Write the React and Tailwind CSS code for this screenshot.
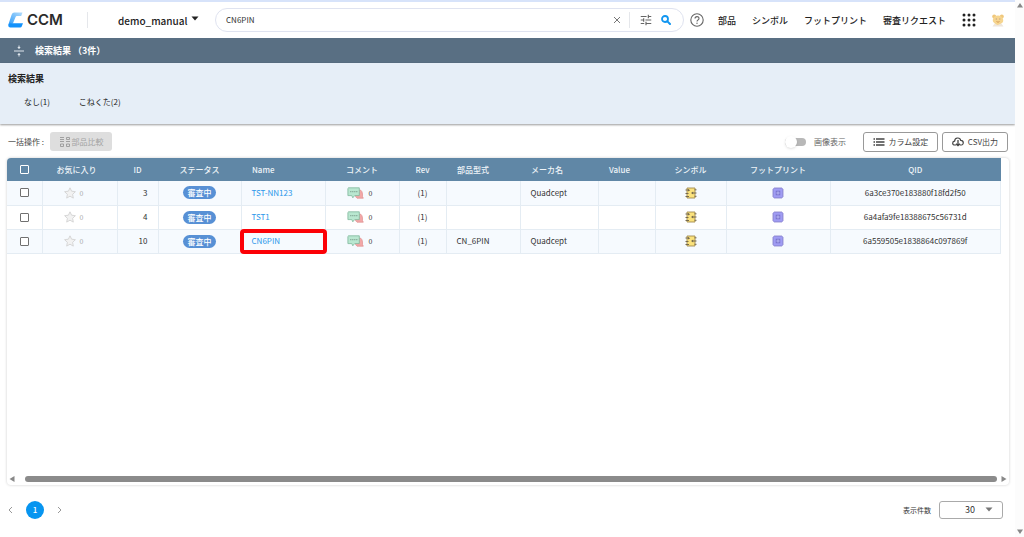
import React from 'react';

const rows = [
  { id: 3, name: 'TST-NN123', model: '', maker: 'Quadcept', qid: '6a3ce370e183880f18fd2f50' },
  { id: 4, name: 'TST1', model: '', maker: '', qid: '6a4afa9fe18388675c56731d' },
  { id: 10, name: 'CN6PIN', model: 'CN_6PIN', maker: 'Quadcept', qid: '6a559505e1838864c097869f', marked: true },
];

const navItems = ['部品', 'シンボル', 'フットプリント', '審査リクエスト'];

const Logo = () => (
  <a href="#" className="flex items-center gap-[3px] w-20 shrink-0 border-r border-gray-200 h-4 text-[#2b2b2b]">
    <svg width="16" height="16" viewBox="0 0 16 16">
      <defs>
        <linearGradient id="logoTop" x1="0" y1="1" x2="1" y2="0">
          <stop offset="0" stopColor="#2f9dfb" />
          <stop offset="1" stopColor="#b5dcfa" />
        </linearGradient>
      </defs>
      <path d="M6.2 0.5H14.5L13.2 4H8.8Q8 4 7.6 4.9L4.9 11.6 0.4 12.4 3.6 2.8Q4.4 0.6 6.2 0.5z" fill="url(#logoTop)" />
      <path d="M0.3 12.6Q1 11.3 3 11.3H15L13.7 14.6Q13.3 15.6 12.2 15.6H2.4Q0 15.4 0.3 12.6z" fill="#1492fb" />
    </svg>
    <span className="font-[Inter,sans-serif] text-[15px] font-semibold">CCM</span>
  </a>
);

const Caret = ({ className }) => (
  <svg className={className} width="8" height="5" viewBox="0 0 8 5">
    <path d="M0.5 0.5h7L4 4.5z" fill="currentColor" />
  </svg>
);

const TuneIcon = () => (
  <svg width="14" height="14" viewBox="0 0 24 24" fill="#666">
    <path d="M3 17v2h6v-2H3zM3 5v2h10V5H3zm10 16v-2h8v-2h-8v-2h-2v6h2zM7 9v2H3v2h4v2h2V9H7zm14 4v-2H11v2h10zm-6-4h2V7h4V5h-4V3h-2v6z" />
  </svg>
);

const SearchIcon = () => (
  <svg width="10" height="10" viewBox="0 0 10 10" fill="none" stroke="#1296f0">
    <circle cx="4" cy="4" r="3" strokeWidth="1.8" />
    <path d="M6.4 6.4L9 9" strokeWidth="2" strokeLinecap="round" />
  </svg>
);

const HelpIcon = () => (
  <svg width="14" height="14" viewBox="0 0 14 14" fill="none" stroke="#666">
    <circle cx="7" cy="7" r="6.2" strokeWidth="1.1" />
    <path d="M5 5.6C5 3 9 3 9 5.4 9 6.8 7 6.9 7 8.6" strokeWidth="1.1" />
    <circle cx="7" cy="10.3" r="0.7" fill="#666" stroke="none" />
  </svg>
);

const AppsIcon = () => (
  <svg width="14" height="14" viewBox="0 0 14 14" fill="#222">
    {[2, 7, 12].map((y) => [2, 7, 12].map((x) => <circle key={`${x}-${y}`} cx={x} cy={y} r="1.5" />))}
  </svg>
);

const Avatar = () => (
  <svg width="12" height="13" viewBox="0 0 12 13">
    <path d="M0.5 12.5L3 9h6l2.5 3.5z" fill="#eee6dc" />
    <circle cx="2.2" cy="2.4" r="2" fill="#efc77c" />
    <circle cx="9.8" cy="2.4" r="2" fill="#efc77c" />
    <path d="M1 5Q2 1.5 6 1.5T11 5 9 9.5 6 11 3 9.5 1 5z" fill="#f6d58f" />
    <path d="M3.8 5h1M7.3 5h1" stroke="#a88" strokeWidth="0.9" />
    <path d="M4.5 7.5Q6 9 7.5 7.5" stroke="#d59a55" fill="none" />
  </svg>
);

const CollapseIcon = () => (
  <svg width="12" height="12" viewBox="0 0 12 12" fill="none" stroke="#dfe6ec">
    <path d="M1 6h10M6 0.5v3M6 11.5v-3" />
    <path d="M4.3 2L6 4l1.7-2zM4.3 10L6 8l1.7 2z" fill="#dfe6ec" stroke="none" />
  </svg>
);

const CompareIcon = () => (
  <svg width="12" height="12" viewBox="0 0 12 12" fill="none" stroke="#999">
    <path d="M1 1.5h4M1 3.5h4M1 5.5h4M1.5 8v2.5h3V8zM7.5 1.5v2h3v-2zM7 5.5h4M7.5 8v2.5h3V8z" strokeWidth="0.9" />
  </svg>
);

const ListIcon = () => (
  <svg width="12" height="10" viewBox="0 0 12 10" stroke="#444" strokeWidth="1.3">
    <path d="M0.5 2h1.5M3 2h8.5M0.5 5h1.5M3 5h8.5M0.5 8h1.5M3 8h8.5" />
  </svg>
);

const CloudIcon = () => (
  <svg width="12" height="10" viewBox="0 0 12 10" fill="none" stroke="#444">
    <path d="M4.3 8H2.8C0 8 0 4.4 2.6 4.2 2.8 0.2 8 0 8.7 3.3 12 3.2 12 8 9.3 8H7.8" strokeWidth="1.2" />
    <path d="M6 3v5.5M4 6.7l2 2 2-2" strokeWidth="1.3" />
  </svg>
);

const StarIcon = () => (
  <svg width="12" height="12" viewBox="0 0 12 12">
    <path d="M6 0.8l1.6 3.4 3.8 0.5-2.8 2.6 0.7 3.8L6 9.2l-3.3 1.9 0.7-3.8L0.6 4.7l3.8-0.5z" fill="#f2f2f2" stroke="#d2d2d2" strokeWidth="0.9" />
  </svg>
);

const CommentIcon = () => (
  <svg width="17" height="12" viewBox="0 0 17 12">
    <path d="M10 3h3.5Q15.5 4.5 15.5 7v2.5l0.8 1.7H10l-1.5-1.7z" fill="#f3a7a7" stroke="#e09090" strokeWidth="0.7" />
    <path d="M1.5 0.8h10.8v7.8H7.6L5.8 10.8 4.8 8.6H0.9V1.4z" fill="#b9e7d0" stroke="#7fb79c" strokeWidth="0.8" />
    <path d="M3 4.6h7.5" stroke="#8db3a1" strokeWidth="1.4" strokeDasharray="1.5 0.5" />
  </svg>
);

const SymbolIcon = () => (
  <svg width="12" height="12" viewBox="0 0 12 12">
    <path d="M2 1h8v10H2z" fill="#fbe27c" stroke="#a08a50" strokeWidth="0.9" />
    <path d="M0.5 3h3.5M0.5 6.5h3M0.5 9.5h3.5M9.5 2.8h2M7 6h4.5M9.5 9.3h2" stroke="#776a4c" strokeWidth="1" />
    <path d="M6 6l2.2-1.6v3.2zM3 2l2.2 1.2L3 4.4z" fill="#776a4c" />
  </svg>
);

const FootprintIcon = () => (
  <svg width="12" height="12" viewBox="0 0 12 12">
    <path d="M3 0.3v11.4M5 0.3v11.4M7 0.3v11.4M9 0.3v11.4M0.3 3h11.4M0.3 5h11.4M0.3 7h11.4M0.3 9h11.4" stroke="#8d87c9" strokeWidth="0.9" />
    <rect x="1.3" y="1.3" width="9.4" height="9.4" rx="1" fill="#a09cf3" stroke="#8781d6" strokeWidth="0.8" />
    <rect x="4.2" y="4.2" width="3.6" height="3.6" fill="#c9c8ff" stroke="#6f69c4" strokeWidth="0.8" />
    <circle cx="6" cy="6" r="0.7" fill="#6f69c4" />
  </svg>
);

const Checkbox = ({ label, light }) => (
  <input
    type="checkbox"
    aria-label={label}
    className={
      light
        ? 'block mx-auto appearance-none w-[9px] h-[9px] border border-white rounded-[1px]'
        : 'block mx-auto appearance-none w-[9px] h-[9px] border border-[#707070] rounded-[1px] bg-white'
    }
  />
);

const Header = () => (
  <header className="flex items-center h-9 pl-2 pr-[11px] text-[9px] font-medium text-[#222]">
    <Logo />
    <div className="relative ml-7 w-[99px] shrink-0">
      <select aria-label="ワークスペース" className="appearance-none w-full h-6 pl-0.5 bg-transparent text-[10px]">
        <option>demo_manual</option>
      </select>
      <Caret className="absolute right-4 top-2 pointer-events-none" />
    </div>
    <div className="flex flex-1 items-center h-6 border border-[#dfe3f0] rounded-full pl-2.5 pr-3">
      <input
        type="text"
        aria-label="検索"
        defaultValue="CN6PIN"
        className="flex-1 min-w-0 bg-transparent outline-none text-[8px] font-normal text-[#333]"
      />
      <button type="button" aria-label="クリア" className="px-2">
        <svg width="8" height="8" viewBox="0 0 8 8" stroke="#777"><path d="M1 1l6 6M7 1L1 7" /></svg>
      </button>
      <div className="w-px h-4 bg-gray-200 mr-[9px]" />
      <button type="button" aria-label="絞り込み"><TuneIcon /></button>
      <button type="button" aria-label="検索する" className="ml-2"><SearchIcon /></button>
    </div>
    <button type="button" aria-label="ヘルプ" className="ml-1.5 mr-3.5"><HelpIcon /></button>
    <nav className="flex gap-4 pt-px whitespace-nowrap">
      {navItems.map((item) => (
        <a key={item} href="#">{item}</a>
      ))}
    </nav>
    <button type="button" aria-label="アプリ一覧" className="ml-4"><AppsIcon /></button>
    <button type="button" aria-label="アカウント" className="ml-4"><Avatar /></button>
  </header>
);

const Toolbar = () => (
  <div className="flex items-center h-[34px] pt-px pl-2 pr-[7px] text-[8px] text-[#444]">
    <span className="w-9">一括操作 :</span>
    <button type="button" disabled className="flex items-center justify-center gap-px h-[19px] w-[62px] ml-1.5 rounded-[3px] bg-[#dedede] text-[#a3a3a3]">
      <CompareIcon />部品比較
    </button>
    <label className="flex items-center ml-auto mr-[17px] text-[#666]">
      <input
        type="checkbox"
        role="switch"
        className="appearance-none relative w-[21px] h-2 mr-2 rounded-full bg-[#b8b8b8] before:absolute before:left-0 before:-top-0.5 before:w-3 before:h-3 before:rounded-full before:bg-white before:shadow"
      />
      画像表示
    </label>
    <button type="button" className="flex items-center justify-center gap-1 w-[75px] h-5 border border-[#999] rounded-[3px] bg-white">
      <ListIcon />カラム設定
    </button>
    <button type="button" className="flex items-center justify-center gap-1 w-[66px] h-5 ml-1 border border-[#999] rounded-[3px] bg-white">
      <CloudIcon />CSV出力
    </button>
  </div>
);

const PartsTable = () => (
  <table className="w-full table-fixed border-collapse text-[8px] text-[#333]">
    <colgroup>
      <col className="w-[35px]" />
      <col className="w-[75px]" />
      <col className="w-[41px]" />
      <col className="w-[83px]" />
      <col className="w-[84px]" />
      <col className="w-[74px]" />
      <col className="w-[47px]" />
      <col className="w-[74px]" />
      <col className="w-[78px]" />
      <col className="w-[57px]" />
      <col className="w-[71px]" />
      <col className="w-[104px]" />
      <col />
    </colgroup>
    <thead>
      <tr className="h-[23px] bg-[#6087a6] text-[#eef4f8] [&>th]:font-medium">
        <th className="rounded-tl"><Checkbox light label="すべて選択" /></th>
        <th className="pr-1.5">お気に入り</th>
        <th>ID</th>
        <th>ステータス</th>
        <th className="text-left pl-[11px]">Name</th>
        <th>コメント</th>
        <th>Rev</th>
        <th className="text-left pl-[11px]">部品型式</th>
        <th className="text-left pl-[11px]">メーカ名</th>
        <th className="text-left pl-[11px]">Value</th>
        <th>シンボル</th>
        <th>フットプリント</th>
        <th>QID</th>
      </tr>
    </thead>
    <tbody>
      {rows.map((row) => (
        <tr key={row.id} className="h-6 odd:bg-[#f6fafe] border-b border-[#e4ecf3] [&>td+td]:border-l [&>td+td]:border-[#e4ecf3]">
          <td><Checkbox label={`${row.name}を選択`} /></td>
          <td>
            <button type="button" className="flex items-center gap-1 ml-[21px] text-[7px] text-[#aaa]">
              <StarIcon />0
            </button>
          </td>
          <td className="text-right pr-2.5">{row.id}</td>
          <td className="text-center">
            <span className="inline-block w-[33px] h-[13px] leading-[13px] rounded-full bg-[#5790d5] text-white font-medium align-middle">審査中</span>
          </td>
          <td className="relative pl-2.5">
            <a href="#" className="text-[#2c97ea]">{row.name}</a>
            {row.marked && (
              <div className="absolute -inset-x-0.5 -inset-y-px border-4 border-[#fc0006] rounded pointer-events-none" />
            )}
          </td>
          <td>
            <button type="button" className="flex items-center gap-[5px] ml-[21px] text-[7px]">
              <CommentIcon />0
            </button>
          </td>
          <td className="text-center">(1)</td>
          <td className="pl-2.5">{row.model}</td>
          <td className="pl-2.5">{row.maker}</td>
          <td></td>
          <td><div className="flex justify-center"><SymbolIcon /></div></td>
          <td><div className="flex justify-center"><FootprintIcon /></div></td>
          <td className="text-center border-r border-r-[#e4ecf3]">{row.qid}</td>
        </tr>
      ))}
    </tbody>
  </table>
);

const Pagination = () => (
  <footer className="flex items-center h-[52px] pb-0.5 pl-2 pr-3 text-[8px] text-[#333]">
    <button type="button" aria-label="前へ">
      <svg width="5" height="8" viewBox="0 0 5 8" fill="none" stroke="#999"><path d="M4 1L1 4l3 3" /></svg>
    </button>
    <button type="button" className="w-[18px] h-[18px] mx-[13px] rounded-full bg-[#0795f0] text-white font-medium">1</button>
    <button type="button" aria-label="次へ">
      <svg width="5" height="8" viewBox="0 0 5 8" fill="none" stroke="#999"><path d="M1 1l3 3-3 3" /></svg>
    </button>
    <label htmlFor="page-size" className="ml-auto mr-2 text-[7px]">表示件数</label>
    <div className="relative">
      <select id="page-size" className="appearance-none block w-16 h-[18px] pl-[25px] border border-[#aaa] rounded-[3px] bg-white text-[9px]">
        <option>30</option>
      </select>
      <Caret className="absolute right-2.5 top-1.5 text-[#777] pointer-events-none" />
    </div>
  </footer>
);

const App = () => {
  return (
    <div className="flex min-h-screen bg-[#fdfdfd] font-['Noto_Sans_CJK_JP',sans-serif]">
      <div className="flex flex-col flex-1 min-w-0 bg-white">
        <div className="h-0.5 bg-[#d7e3fa]" />
        <Header />

        <div className="flex items-center gap-2.5 h-[25px] pl-[13px] bg-[#596f83] text-white text-[9px] font-bold">
          <button type="button" aria-label="折りたたむ"><CollapseIcon /></button>
          <h1>検索結果 （3件）</h1>
        </div>

        <section className="h-[61px] px-2 pt-2 bg-[#e6eef7] shadow-[0_1px_2px_rgba(0,0,0,0.4)] text-[9px] text-[#222]">
          <h2 className="font-bold leading-4">検索結果</h2>
          <div className="flex gap-[29px] pl-4 pt-[7px] text-[8px] leading-4">
            <a href="#">なし(1)</a>
            <a href="#">こねくた(2)</a>
          </div>
        </section>

        <Toolbar />

        <main className="flex flex-col flex-1 ml-[7px] mr-1.5 pr-2 rounded shadow-[0_0_3px_rgba(0,0,0,0.2)]">
          <PartsTable />
          <div className="flex items-center gap-2.5 h-3 mt-auto -mr-1.5 pl-0.5">
            <svg width="6" height="6" viewBox="0 0 6 6"><path d="M5.5 0v6L0.5 3z" fill="#888" /></svg>
            <div className="flex-1 h-1.5 rounded-full bg-[#8b8b8b]" />
            <svg className="-ml-1.5" width="6" height="6" viewBox="0 0 6 6"><path d="M0.5 0v6L5.5 3z" fill="#888" /></svg>
          </div>
        </main>

        <Pagination />
      </div>

      <div className="flex flex-col justify-between items-center w-[9px] py-[3px] bg-[#fcfcfc]">
        <svg width="6" height="5" viewBox="0 0 6 5"><path d="M0 4.5h6L3 0z" fill="#888" /></svg>
        <svg width="6" height="5" viewBox="0 0 6 5"><path d="M0 0.5h6L3 5z" fill="#888" /></svg>
      </div>
    </div>
  );
};

export default App;
